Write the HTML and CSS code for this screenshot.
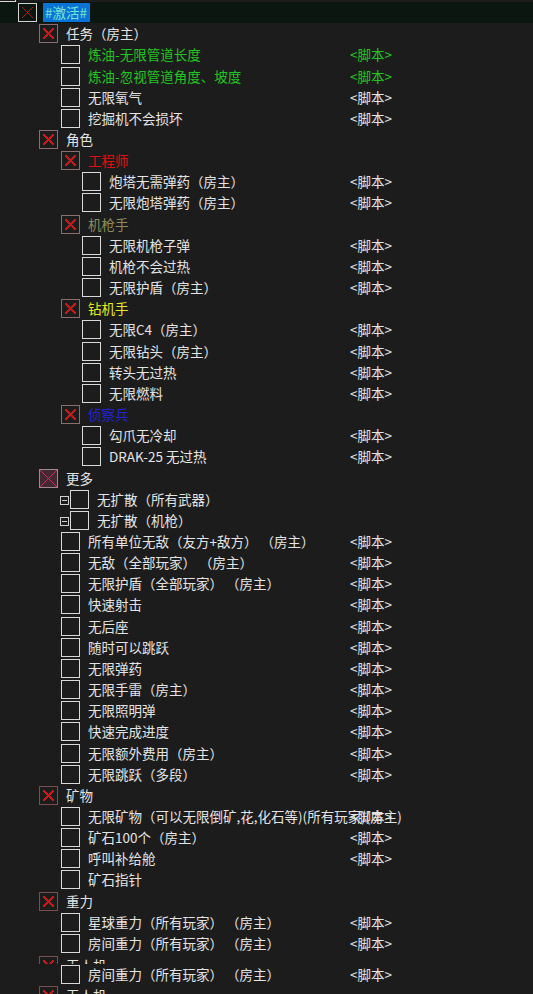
FILE: index.html
```html
<!DOCTYPE html>
<html lang="zh-CN">
<head>
<meta charset="utf-8">
<title>Cheat Table</title>
<link rel="stylesheet" href="styles.css">
</head>
<body>
<div class="tree">
  <div class="cut-top"><span class="cut-box"></span></div>

  <div class="row sel"><div class="main l0"><span class="cb x light"></span><span class="desc hl">#激活#</span></div><span class="val"></span></div>

  <div class="row"><div class="main l1"><span class="cb x"></span><span class="desc">任务（房主）</span></div><span class="val"></span></div>
  <div class="row green"><div class="main l2"><span class="cb"></span><span class="desc">炼油-无限管道长度</span></div><span class="val">&lt;脚本&gt;</span></div>
  <div class="row green"><div class="main l2"><span class="cb"></span><span class="desc">炼油-忽视管道角度、坡度</span></div><span class="val">&lt;脚本&gt;</span></div>
  <div class="row"><div class="main l2"><span class="cb"></span><span class="desc">无限氧气</span></div><span class="val">&lt;脚本&gt;</span></div>
  <div class="row"><div class="main l2"><span class="cb"></span><span class="desc">挖掘机不会损坏</span></div><span class="val">&lt;脚本&gt;</span></div>

  <div class="row"><div class="main l1"><span class="cb x"></span><span class="desc">角色</span></div><span class="val"></span></div>
  <div class="row red"><div class="main l2"><span class="cb x"></span><span class="desc">工程师</span></div><span class="val"></span></div>
  <div class="row"><div class="main l3"><span class="cb"></span><span class="desc">炮塔无需弹药（房主）</span></div><span class="val">&lt;脚本&gt;</span></div>
  <div class="row"><div class="main l3"><span class="cb"></span><span class="desc">无限炮塔弹药（房主）</span></div><span class="val">&lt;脚本&gt;</span></div>
  <div class="row olive"><div class="main l2"><span class="cb x"></span><span class="desc">机枪手</span></div><span class="val"></span></div>
  <div class="row"><div class="main l3"><span class="cb"></span><span class="desc">无限机枪子弹</span></div><span class="val">&lt;脚本&gt;</span></div>
  <div class="row"><div class="main l3"><span class="cb"></span><span class="desc">机枪不会过热</span></div><span class="val">&lt;脚本&gt;</span></div>
  <div class="row"><div class="main l3"><span class="cb"></span><span class="desc">无限护盾（房主）</span></div><span class="val">&lt;脚本&gt;</span></div>
  <div class="row yellow"><div class="main l2"><span class="cb x"></span><span class="desc">钻机手</span></div><span class="val"></span></div>
  <div class="row"><div class="main l3"><span class="cb"></span><span class="desc">无限C4（房主）</span></div><span class="val">&lt;脚本&gt;</span></div>
  <div class="row"><div class="main l3"><span class="cb"></span><span class="desc">无限钻头（房主）</span></div><span class="val">&lt;脚本&gt;</span></div>
  <div class="row"><div class="main l3"><span class="cb"></span><span class="desc">转头无过热</span></div><span class="val">&lt;脚本&gt;</span></div>
  <div class="row"><div class="main l3"><span class="cb"></span><span class="desc">无限燃料</span></div><span class="val">&lt;脚本&gt;</span></div>
  <div class="row blue"><div class="main l2"><span class="cb x"></span><span class="desc">侦察兵</span></div><span class="val"></span></div>
  <div class="row"><div class="main l3"><span class="cb"></span><span class="desc">勾爪无冷却</span></div><span class="val">&lt;脚本&gt;</span></div>
  <div class="row"><div class="main l3"><span class="cb"></span><span class="desc">DRAK-25 无过热</span></div><span class="val">&lt;脚本&gt;</span></div>

  <div class="row"><div class="main l1"><span class="cb x more"></span><span class="desc">更多</span></div><span class="val"></span></div>
  <div class="row"><div class="main l2"><span class="exp"></span><span class="cb"></span><span class="desc">无扩散（所有武器）</span></div><span class="val"></span></div>
  <div class="row"><div class="main l2"><span class="exp"></span><span class="cb"></span><span class="desc">无扩散（机枪）</span></div><span class="val"></span></div>
  <div class="row"><div class="main l2"><span class="cb"></span><span class="desc">所有单位无敌（友方+敌方） （房主）</span></div><span class="val">&lt;脚本&gt;</span></div>
  <div class="row"><div class="main l2"><span class="cb"></span><span class="desc">无敌（全部玩家） （房主）</span></div><span class="val">&lt;脚本&gt;</span></div>
  <div class="row"><div class="main l2"><span class="cb"></span><span class="desc">无限护盾（全部玩家） （房主）</span></div><span class="val">&lt;脚本&gt;</span></div>
  <div class="row"><div class="main l2"><span class="cb"></span><span class="desc">快速射击</span></div><span class="val">&lt;脚本&gt;</span></div>
  <div class="row"><div class="main l2"><span class="cb"></span><span class="desc">无后座</span></div><span class="val">&lt;脚本&gt;</span></div>
  <div class="row"><div class="main l2"><span class="cb"></span><span class="desc">随时可以跳跃</span></div><span class="val">&lt;脚本&gt;</span></div>
  <div class="row"><div class="main l2"><span class="cb"></span><span class="desc">无限弹药</span></div><span class="val">&lt;脚本&gt;</span></div>
  <div class="row"><div class="main l2"><span class="cb"></span><span class="desc">无限手雷（房主）</span></div><span class="val">&lt;脚本&gt;</span></div>
  <div class="row"><div class="main l2"><span class="cb"></span><span class="desc">无限照明弹</span></div><span class="val">&lt;脚本&gt;</span></div>
  <div class="row"><div class="main l2"><span class="cb"></span><span class="desc">快速完成进度</span></div><span class="val">&lt;脚本&gt;</span></div>
  <div class="row"><div class="main l2"><span class="cb"></span><span class="desc">无限额外费用（房主）</span></div><span class="val">&lt;脚本&gt;</span></div>
  <div class="row"><div class="main l2"><span class="cb"></span><span class="desc">无限跳跃（多段）</span></div><span class="val">&lt;脚本&gt;</span></div>

  <div class="row"><div class="main l1"><span class="cb x dark"></span><span class="desc">矿物</span></div><span class="val"></span></div>
  <div class="row"><div class="main l2"><span class="cb"></span><span class="desc">无限矿物（可以无限倒矿,花,化石等)(所有玩家)(房主)</span></div><span class="val">&lt;脚本&gt;</span></div>
  <div class="row"><div class="main l2"><span class="cb"></span><span class="desc">矿石100个（房主）</span></div><span class="val">&lt;脚本&gt;</span></div>
  <div class="row"><div class="main l2"><span class="cb"></span><span class="desc">呼叫补给舱</span></div><span class="val">&lt;脚本&gt;</span></div>
  <div class="row"><div class="main l2"><span class="cb"></span><span class="desc">矿石指针</span></div><span class="val"></span></div>

  <div class="row"><div class="main l1"><span class="cb x dark"></span><span class="desc">重力</span></div><span class="val"></span></div>
  <div class="row"><div class="main l2"><span class="cb"></span><span class="desc">星球重力（所有玩家） （房主）</span></div><span class="val">&lt;脚本&gt;</span></div>
  <div class="row"><div class="main l2"><span class="cb"></span><span class="desc">房间重力（所有玩家） （房主）</span></div><span class="val">&lt;脚本&gt;</span></div>

  <div class="row clip"><div class="main l1"><span class="cb x dark"></span><span class="desc">无人机</span></div><span class="val"></span></div>
  <div class="row"><div class="main l2"><span class="cb"></span><span class="desc">房间重力（所有玩家） （房主）</span></div><span class="val">&lt;脚本&gt;</span></div>
  <div class="row"><div class="main l1"><span class="cb x dark"></span><span class="desc">无人机</span></div><span class="val"></span></div>
</div>
</body>
</html>
```

FILE: styles.css
```css
html, body {
  margin: 0;
  padding: 0;
  background: #1c1c1c;
  height: 100%;
  overflow: hidden;
}

.tree {
  font-family: "Noto Sans CJK SC", "Noto Sans", sans-serif;
  font-size: 13.5px;
  color: #e4e4e4;
  display: flex;
  flex-direction: column;
}

.cut-top {
  height: 2px;
  overflow: hidden;
  display: flex;
}

.cut-box {
  display: block;
  width: 16px;
  height: 2px;
  box-sizing: border-box;
  border-right: 1px solid #d8d8d8;
  border-bottom: 1px solid #d8d8d8;
}

.row {
  display: grid;
  grid-template-columns: 350px 1fr;
  height: 21.17px;
  align-items: center;
  flex-shrink: 0;
  white-space: nowrap;
  line-height: 21px;
}

.row.sel {
  background: #0b1611;
}

.row.clip {
  height: 10px;
  overflow: hidden;
  align-items: start;
}

.row.clip .main {
  padding-top: 1px;
}

.main {
  display: flex;
  align-items: center;
  min-width: 0;
}

.l0 { padding-left: 18px; }
.l1 { padding-left: 39px; }
.l2 { padding-left: 61px; }
.l3 { padding-left: 82px; }

.cb {
  display: block;
  flex: none;
  width: 19px;
  height: 19px;
  box-sizing: border-box;
  border: 1px solid #d9d9d9;
  margin-right: 8px;
}

.cb.x {
  border-color: #8b6f6f;
  padding: 3px;
  background-clip: content-box;
  background-origin: content-box;
  background-image:
    linear-gradient(45deg, transparent calc(50% - 0.8px), #c41a1a calc(50% - 0.8px), #c41a1a calc(50% + 0.8px), transparent calc(50% + 0.8px)),
    linear-gradient(-45deg, transparent calc(50% - 0.8px), #c41a1a calc(50% - 0.8px), #c41a1a calc(50% + 0.8px), transparent calc(50% + 0.8px));
  background-color: transparent;
}

.cb.x.light {
  border-color: #d4d4d4;
  background-image:
    linear-gradient(45deg, transparent calc(50% - 0.7px), #b01818 calc(50% - 0.7px), #b01818 calc(50% + 0.7px), transparent calc(50% + 0.7px)),
    linear-gradient(-45deg, transparent calc(50% - 0.7px), #b01818 calc(50% - 0.7px), #b01818 calc(50% + 0.7px), transparent calc(50% + 0.7px));
}

.cb.x.dark {
  border-color: #7d4c4f;
}

.cb.x.more {
  border-color: #a08894;
  background-clip: border-box;
  background-origin: border-box;
  padding: 0;
  background-color: #45272f;
  background-image:
    linear-gradient(45deg, transparent calc(50% - 0.6px), #c0306a calc(50% - 0.6px), #c0306a calc(50% + 0.6px), transparent calc(50% + 0.6px)),
    linear-gradient(-45deg, transparent calc(50% - 0.6px), #c0306a calc(50% - 0.6px), #c0306a calc(50% + 0.6px), transparent calc(50% + 0.6px));
}

.exp {
  display: block;
  flex: none;
  width: 9px;
  height: 9px;
  box-sizing: border-box;
  border: 1px solid #cfcfcf;
  margin-right: 1px;
  margin-left: -1px;
  margin-top: 2px;
  background-image: linear-gradient(#cfcfcf, #cfcfcf);
  background-size: 5px 1px;
  background-position: center;
  background-repeat: no-repeat;
}

.desc {
  display: block;
  overflow: visible;
}

.desc.hl {
  background: #0a74d6;
  color: #74e6cf;
  padding: 0 3px 0 2px;
  margin-left: -2px;
  line-height: 19px;
}

.val {
  display: block;
}

.green .desc, .green .val { color: #22c522; }
.red .desc { color: #e00f0f; }
.olive .desc { color: #8e8c5a; }
.yellow .desc { color: #e8e820; }
.blue .desc { color: #2323d6; }
```
